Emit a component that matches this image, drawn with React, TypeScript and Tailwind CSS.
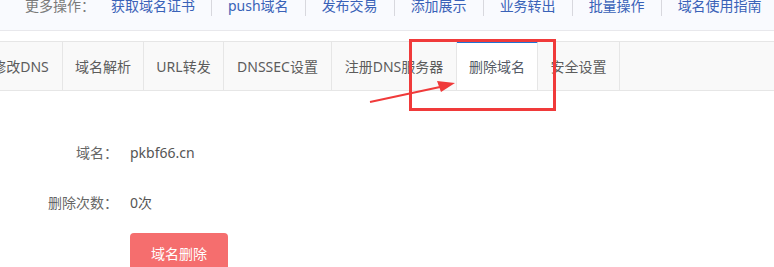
const FONT = { fontFamily: '"Noto Sans", "Noto Sans CJK SC", sans-serif' };

const links = ["获取域名证书", "push域名", "发布交易", "添加展示", "业务转出", "批量操作", "域名使用指南"];

const tabs = [
  { label: "修改DNS", w: "w-[84px]" },
  { label: "域名解析", w: "w-[81px]" },
  { label: "URL转发", w: "w-[80px]" },
  { label: "DNSSEC设置", w: "w-[108px]" },
  { label: "注册DNS服务器", w: "w-[125px]" },
  { label: "删除域名", w: "w-[81px]", active: true },
  { label: "安全设置", w: "w-[82px]" },
];

function TopBar() {
  return (
    <div className="h-[31px] bg-[#f9fafe] border-b border-[#e8e8ec] overflow-hidden">
      <div className="flex items-center h-[20px] mt-[-4px] text-[14px] leading-[20px] whitespace-nowrap">
        <span className="ml-[25px] w-[86px] text-[#7a7a7a]">更多操作：</span>
        {links.map((l, i) => (
          <div key={l} className="flex items-center h-full">
            {i > 0 && <div className="w-px h-full bg-[#d8d8de]"></div>}
            <span className="px-[16px] text-[#3a62b8]">{l}</span>
          </div>
        ))}
      </div>
    </div>
  );
}

function Tabs() {
  return (
    <div className="mt-[10px] h-[50px] bg-[#f9f9f9] border-y border-[#e6e6e6] flex overflow-visible">
      <div className="flex ml-[-21px] h-full">
        {tabs.map((t) =>
          t.active ? (
            <div
              key={t.label}
              className={`${t.w} h-[49px] -mt-px bg-white border-t-2 border-[#1f74d6] border-r border-r-[#e6e6e6] flex items-center justify-center text-[14px] text-[#555a66]`}
            >
              {t.label}
            </div>
          ) : (
            <div
              key={t.label}
              className={`${t.w} h-full border-r border-[#e6e6e6] flex items-center justify-center text-[14px] text-[#5c5c5c]`}
            >
              {t.label}
            </div>
          )
        )}
      </div>
    </div>
  );
}

function Row({ label, value }: { label: string; value: string }) {
  return (
    <div className="flex items-center h-[20px] text-[14px] leading-[20px]">
      <span className="w-[118px] text-right text-[#666]">{label}</span>
      <span className="ml-[12px] text-[#555]">{value}</span>
    </div>
  );
}

export default function App() {
  return (
    <div className="relative w-[774px] h-[267px] overflow-hidden bg-white" style={FONT}>
      <TopBar />
      <Tabs />
      <div className="pt-[52px]">
        <Row label="域名：" value="pkbf66.cn" />
        <div className="mt-[30px]">
          <Row label="删除次数：" value="0次" />
        </div>
        <button className="mt-[20px] ml-[130px] w-[98px] h-[40px] rounded-[4px] bg-[#f56e6e] text-white text-[14px]">
          域名删除
        </button>
      </div>

      {/* annotation */}
      <div className="absolute left-[409px] top-[39px] w-[147px] h-[72px] border-[3px] border-[#f03a3a]"></div>
      <svg className="absolute left-0 top-0" width="774" height="267">
        <line x1="370" y1="102" x2="440" y2="87" stroke="#f03a3a" strokeWidth="2" />
        <polygon points="455,83 437,81 441,92" fill="#f03a3a" />
      </svg>
    </div>
  );
}
